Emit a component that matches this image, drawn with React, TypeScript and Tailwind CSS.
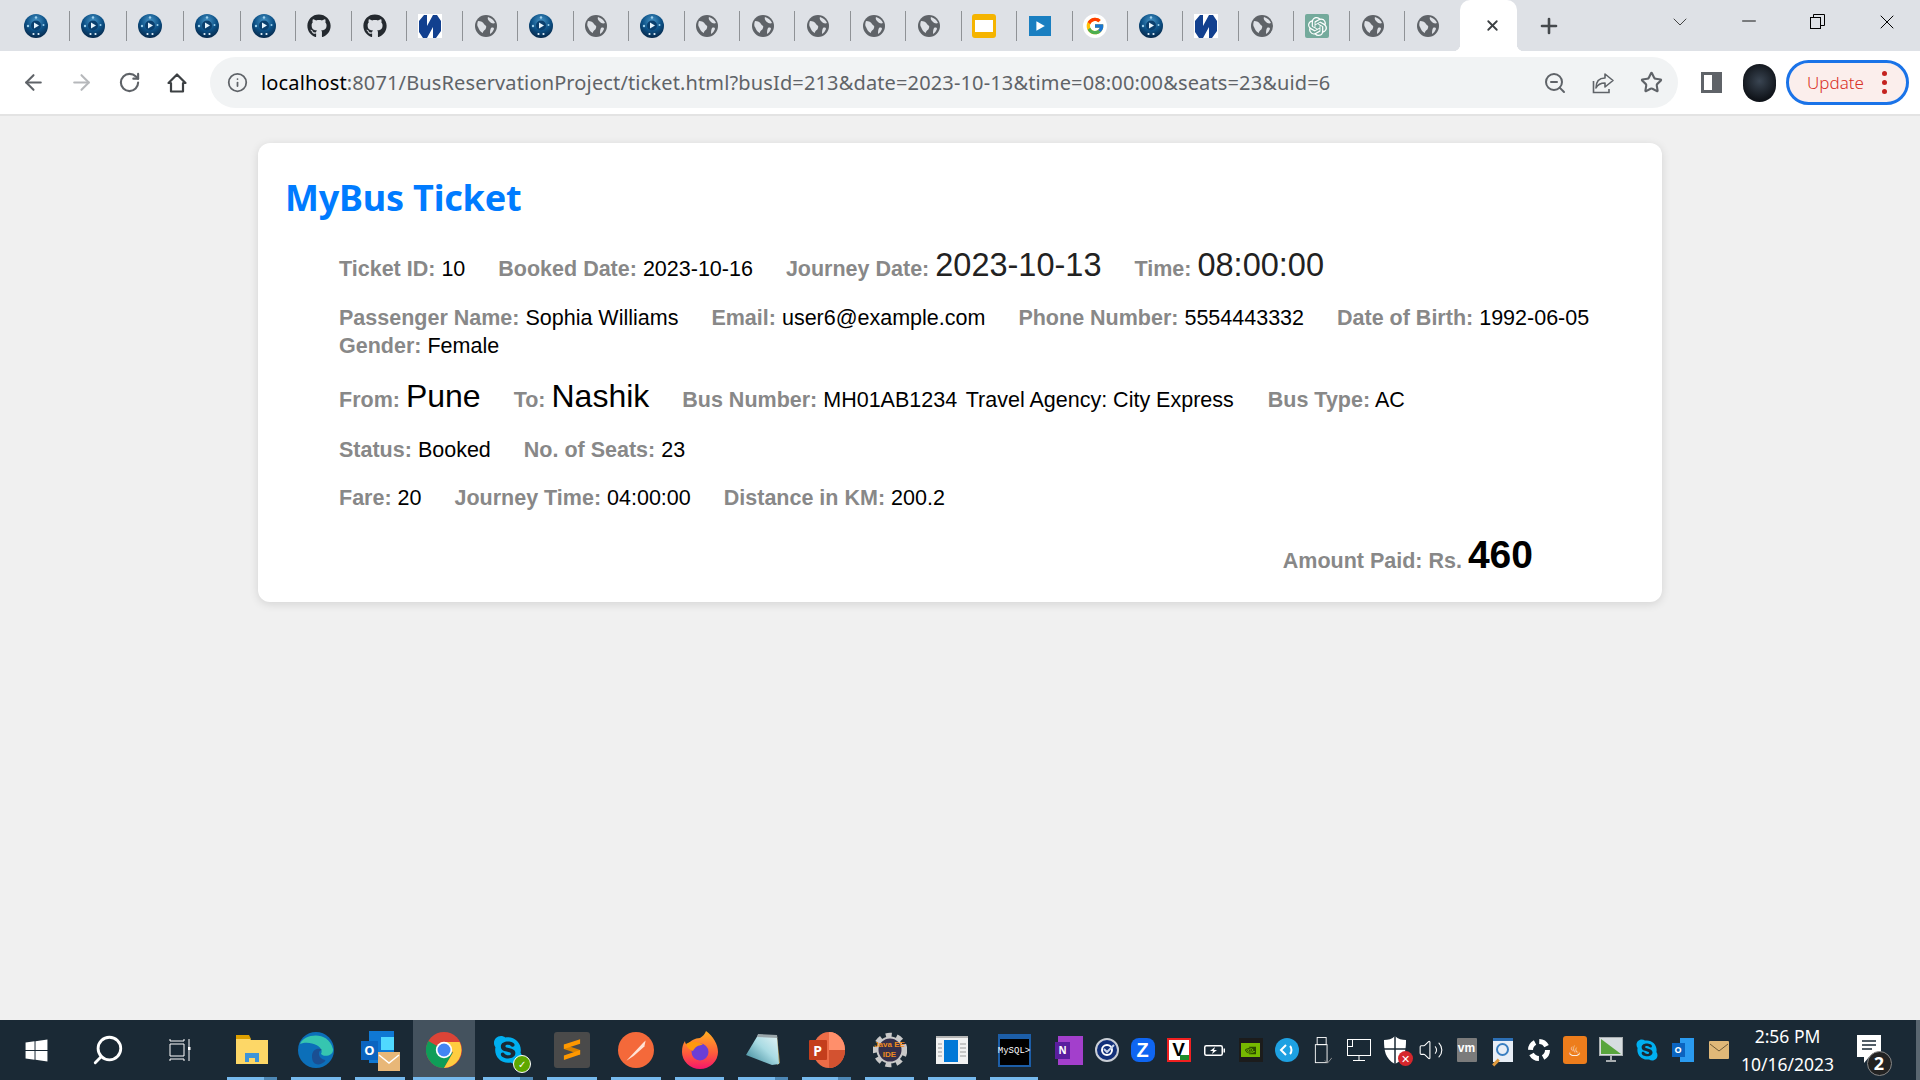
import { FC, ReactNode } from "react";
import { FaGithub, FaWindows, FaSkype } from "react-icons/fa";
import { FcGoogle } from "react-icons/fc";
import { SiOpenai, SiNvidia } from "react-icons/si";
import {
  ArrowLeft,
  ArrowRight,
  RotateCw,
  Info,
  ZoomOut,
  Star,
  ChevronDown,
  Minus,
  X,
  Plus,
  Search,
  Volume2,
} from "lucide-react";

const BlueIcon = () => (
  <svg viewBox="0 0 24 24" className="w-6 h-6">
    <defs>
      <radialGradient id="blueOrb" cx="50%" cy="30%" r="70%">
        <stop offset="0%" stopColor="#4a97c8" />
        <stop offset="55%" stopColor="#0d5288" />
        <stop offset="100%" stopColor="#06284a" />
      </radialGradient>
    </defs>
    <circle cx="12" cy="12" r="12" fill="url(#blueOrb)" />
    <circle cx="12" cy="11.5" r="5" fill="#0a3f6e" />
    <path d="M10 8.5l5 3-5 3z" fill="#e6f4fc" />
    <circle cx="4" cy="12" r="1.2" fill="#9fd0ec" />
    <circle cx="19.5" cy="11" r="1" fill="#9fd0ec" />
    <circle cx="12" cy="3.5" r="1.2" fill="#9fd0ec" />
    <circle cx="9.5" cy="20" r="1.1" fill="#e6f4fc" />
    <circle cx="14.5" cy="20" r="1.1" fill="#e6f4fc" />
  </svg>
);

const GlobeIcon = () => (
  <svg viewBox="0 0 24 24" className="w-6 h-6">
    <circle cx="12" cy="12" r="11" fill="#5f6368" />
    <path
      d="M4 7c3 0 5 1 6 3s3 1 2 4-3 2-3 5c-3-1-4-4-5-6-1-1-1-4 0-6zM14 3c3 1 6 3 7 6-2 1-4 0-5-1s-3-3-2-5zM17 14c2-1 3 0 3 1-1 2-2 4-4 5 0-2 0-4 1-6z"
      fill="#dee1e6"
    />
  </svg>
);

const NIcon = () => (
  <svg viewBox="0 0 24 24" className="w-6 h-6">
    <rect width="24" height="24" fill="#fff" />
    <path
      d="M1 7l5-6h3v11l6-11h4l4 6v10l-5 7h-3V13L9 24H5l-4-6z"
      fill="#12408f"
    />
  </svg>
);

const GithubIcon = () => <FaGithub className="w-6 h-6 text-[#24292f]" />;

const SlidesIcon = () => (
  <div className="w-6 h-6 rounded-[3px] bg-[#f5b400] flex items-center justify-center">
    <div className="w-[18px] h-[12px] bg-white" />
  </div>
);

const VideoIcon = () => (
  <div className="w-[22px] h-[20px] bg-[#1a7fc1] flex items-center justify-center">
    <svg viewBox="0 0 10 10" className="w-3 h-3">
      <path d="M2 1l7 4-7 4z" fill="#fff" />
    </svg>
  </div>
);

const GptIcon = () => (
  <div className="w-6 h-6 rounded-[2px] bg-[#74aa9c] flex items-center justify-center">
    <SiOpenai className="w-[19px] h-[19px] text-white" />
  </div>
);

const GoogleIcon = () => (
  <div className="w-6 h-6 rounded-full bg-white flex items-center justify-center">
    <FcGoogle className="w-5 h-5" />
  </div>
);

const tabIcons: FC[] = [
  BlueIcon, BlueIcon, BlueIcon, BlueIcon, BlueIcon,
  GithubIcon, GithubIcon, NIcon, GlobeIcon, BlueIcon,
  GlobeIcon, BlueIcon, GlobeIcon, GlobeIcon, GlobeIcon,
  GlobeIcon, GlobeIcon, SlidesIcon, VideoIcon, GoogleIcon,
  BlueIcon, NIcon, GlobeIcon, GptIcon, GlobeIcon, GlobeIcon,
];

const TabStrip = () => (
  <div className="h-[51px] bg-[#dee1e6] flex pl-[13px]">
    <div className="flex w-[1447px] shrink-0 pt-[14px] items-start">
      {tabIcons.map((Icon, i) => (
        <div key={i} className="shrink-0 flex items-start pl-[10.75px]">
          <div className="w-6 h-6 shrink-0 flex items-center justify-center">
            <Icon />
          </div>
          {i < tabIcons.length - 1 && (
            <div
              className={`${
                i < 4 ? "ml-[21.25px]" : "ml-[19.7px]"
              } -mt-[3px] w-[1px] shrink-0 h-[30px] bg-[#8f9296]`}
            />
          )}
        </div>
      ))}
    </div>
    <div className="relative w-[57px] shrink-0 h-[51px] bg-white rounded-t-[10px] flex items-center justify-center">
      <span className="absolute -left-[7px] bottom-0 w-[7px] h-[7px] bg-[radial-gradient(circle_at_0_0,#dee1e6_7px,#fff_7.5px)]" />
      <span className="absolute -right-[7px] bottom-0 w-[7px] h-[7px] bg-[radial-gradient(circle_at_100%_0,#dee1e6_7px,#fff_7.5px)]" />
      <X className="w-[17px] h-[17px] text-[#3c4043] ml-[8px]" strokeWidth={2.6} />
    </div>
    <div className="w-[64px] shrink-0 flex items-center justify-center">
      <Plus className="w-[24px] h-[24px] text-[#45494d]" strokeWidth={2.6} />
    </div>
    <div className="flex-1 flex items-start pt-[10px] text-black">
      <div className="w-[69px] flex justify-center ml-[64px]">
        <ChevronDown className="w-[28px] h-[24px] text-[#444]" strokeWidth={1} />
      </div>
      <div className="w-[69px] flex justify-center">
        <Minus className="w-[22px] h-[22px]" strokeWidth={1} />
      </div>
      <div className="w-[69px] flex justify-center pt-[4px]">
        <svg viewBox="0 0 15 15" className="w-[15px] h-[15px]" fill="none" stroke="#000">
          <rect x="0.5" y="3.5" width="10" height="11" />
          <path d="M3.5 3.5v-3h11v11h-4" />
        </svg>
      </div>
      <div className="w-[69px] flex justify-center">
        <X className="w-[24px] h-[24px]" strokeWidth={1} />
      </div>
    </div>
  </div>
);

const Toolbar = () => (
  <div className="h-[65px] bg-white border-b-2 border-[#e3e3e3] flex items-start">
    <div className="flex items-center w-[210px] h-[63px] pl-[9px] text-[#5f6368]">
      <div className="w-[48px] flex justify-center">
        <ArrowLeft className="w-[25px] h-[25px]" strokeWidth={2} />
      </div>
      <div className="w-[48px] flex justify-center">
        <ArrowRight className="w-[25px] h-[25px] text-[#b6b8bb]" strokeWidth={2} />
      </div>
      <div className="w-[48px] flex justify-center">
        <RotateCw className="w-[23px] h-[23px]" strokeWidth={2.2} />
      </div>
      <div className="w-[48px] flex justify-center">
        <svg viewBox="0 0 24 24" className="w-[24px] h-[24px]" fill="none" stroke="#3c4043" strokeWidth="2.2">
          <path d="M12 3.5L3.5 12H6v8.5h12V12h2.5z" strokeLinejoin="round" />
        </svg>
      </div>
    </div>
    <div className="mt-[6px] w-[1468px] h-[51px] bg-[#f1f3f4] rounded-full flex items-center pl-[17px] font-['Noto_Sans',sans-serif]">
      <Info className="w-[21px] h-[21px] text-[#5f6368] shrink-0" />
      <div className="ml-[13px] flex-1 text-[20px] whitespace-nowrap text-[#5f6368] tracking-[0.14px]">
        <span className="text-black">localhost</span>:8071/BusReservationProject/ticket.html?busId=213&amp;date=2023-10-13&amp;time=08:00:00&amp;seats=23&amp;uid=6
      </div>
      <div className="flex items-center text-[#5f6368] pr-[3px]">
        <div className="w-[48px] flex justify-center">
          <ZoomOut className="w-[24px] h-[24px]" />
        </div>
        <div className="w-[48px] flex justify-center">
          <svg viewBox="0 0 24 24" className="w-[24px] h-[24px]" fill="none" stroke="#5f6368" strokeWidth="1.6">
            <path d="M2.5 10v11.5H18V18" />
            <path d="M14 3l8 6.5-8 6.5v-4c-4 0-7 1-9 5 0-6 3-10 9-10z" strokeLinejoin="round" />
          </svg>
        </div>
        <div className="w-[48px] flex justify-center">
          <Star className="w-[23px] h-[23px]" strokeWidth={2.2} />
        </div>
      </div>
    </div>
    <div className="flex items-center h-[63px] ml-[23px]">
      <div className="w-[21px] h-[21px] border-[3px] border-r-[10px] border-[#5f6368]" />
      <div className="ml-[21px] w-[33px] h-[38px] rounded-full bg-[radial-gradient(circle_at_50%_45%,#3a4552,#10141a_70%)]" />
      <div className="ml-[10px] w-[123px] h-[45px] rounded-full border-[3px] border-[#1a73e8] bg-[#fbeeec] flex items-center pl-[18px] text-[#d93025] text-[17px] font-light font-['Noto_Sans',sans-serif]">
        Update
        <div className="ml-[18px] flex flex-col gap-[4px]">
          <span className="w-[5px] h-[5px] rounded-full bg-[#c5221f]" />
          <span className="w-[5px] h-[5px] rounded-full bg-[#c5221f]" />
          <span className="w-[5px] h-[5px] rounded-full bg-[#c5221f]" />
        </div>
      </div>
    </div>
  </div>
);

const Field: FC<{ label: string; children: ReactNode; valueClass?: string }> = ({
  label,
  children,
  valueClass = "",
}) => (
  <span className="mr-[33px] whitespace-nowrap inline-block">
    <b className="font-bold text-[#888888]">{label}:</b>{" "}
    <span className={valueClass}>{children}</span>
  </span>
);

const TicketCard = () => (
  <div className="mt-[27px] mx-auto w-[1404px] h-[459px] bg-white rounded-[12px] shadow-[0_2px_10px_rgba(0,0,0,0.12)] pt-[27px] pl-[27px] font-['Liberation_Sans',sans-serif] text-[21.5px] text-black">
    <h1 className="font-['Noto_Sans',sans-serif] font-bold text-[36px] leading-[56px] text-[#007bff] tracking-[-0.2px]">
      MyBus Ticket
    </h1>
    <div className="pl-[54px] pr-[30px] mt-[25px] leading-[28px]">
      <p className="mb-[21px]">
        <Field label="Ticket ID">10</Field>
        <Field label="Booked Date">2023-10-16</Field>
        <Field label="Journey Date" valueClass="text-[32.5px] text-[#222]">
          2023-10-13
        </Field>
        <Field label="Time" valueClass="text-[32.5px] text-[#222]">
          08:00:00
        </Field>
      </p>
      <p className="mb-[22px]">
        <Field label="Passenger Name">Sophia Williams</Field>
        <Field label="Email">user6@example.com</Field>
        <Field label="Phone Number">5554443332</Field>
        <Field label="Date of Birth">1992-06-05</Field>
        <Field label="Gender">Female</Field>
      </p>
      <p className="mb-[22px]">
        <Field label="From" valueClass="text-[32px]">
          Pune
        </Field>
        <Field label="To" valueClass="text-[32px]">
          Nashik
        </Field>
        <b className="font-bold text-[#888888]">Bus Number:</b>{" "}
        <span className="mr-[3px]">MH01AB1234</span>{" "}
        <span className="mr-[34px]">Travel Agency: City Express</span>
        <Field label="Bus Type">AC</Field>
      </p>
      <p className="mb-[20px]">
        <Field label="Status">Booked</Field>
        <Field label="No. of Seats">23</Field>
      </p>
      <p>
        <Field label="Fare">20</Field>
        <Field label="Journey Time">04:00:00</Field>
        <Field label="Distance in KM">200.2</Field>
      </p>
      <p className="mt-[29px] text-right pr-[99px]">
        <b className="font-bold text-[#888888]">Amount Paid: Rs.</b>{" "}
        <b className="font-bold text-[39px]">460</b>
      </p>
    </div>
  </div>
);

// taskbar drawings
const ChromeIcon = () => (
  <svg viewBox="0 0 36 36" className="w-9 h-9">
    <circle cx="18" cy="18" r="18" fill="#db4437" />
    <path d="M18 18L2.4 9A18 18 0 0 0 18 36l9-15.6z" fill="#0f9d58" />
    <path d="M18 10h15.6A18 18 0 0 1 18 36l9-15.6z" fill="#ffcd40" />
    <circle cx="18" cy="18" r="8.2" fill="#fff" />
    <circle cx="18" cy="18" r="6.5" fill="#4285f4" />
  </svg>
);

const EdgeIcon = () => (
  <svg viewBox="0 0 36 36" className="w-9 h-9">
    <circle cx="18" cy="18" r="18" fill="#0c6fb9" />
    <path d="M2 12C6 2 30-2 35 17c1 6-8 9-12 5 4-8-12-14-21-10z" fill="#36c5b0" />
    <path d="M14 24c0-7 7-9 10-6-5 0-4 9 3 10 2 0-4 6-9 4-3-1-4-4-4-8z" fill="#1a4f93" />
  </svg>
);

const FolderIcon = () => (
  <svg viewBox="0 0 32 30" className="w-8 h-[30px]">
    <path d="M0 2h13l2 3h17v24H0z" fill="#fdd767" />
    <path d="M0 0h13l2 4H0z" fill="#dea000" />
    <path d="M9 27V18h14v9h-4v-4h-6v4z" fill="#3d94d9" />
  </svg>
);

const OutlookIcon = () => (
  <div className="relative w-[38px] h-[38px]">
    <div className="absolute left-[8px] top-0 w-[25px] h-[32px] bg-[#0f78d4]" />
    <div className="absolute left-[20px] top-[6px] w-[13px] h-[13px] bg-[#50d9ff]" />
    <div className="absolute left-0 top-[10px] w-[17px] h-[19px] bg-[#0b64c0] text-white text-[13px] font-bold flex items-center justify-center">
      O
    </div>
    <div className="absolute left-[17px] top-[21px] w-[22px] h-[19px] bg-[#e8b778]">
      <svg viewBox="0 0 22 19" className="w-full h-full">
        <path d="M1 3l10 8 10-8" stroke="#fff" strokeWidth="1.5" fill="none" />
      </svg>
    </div>
  </div>
);

const SkypeIcon = () => (
  <div className="relative w-9 h-9 flex items-center justify-center">
    <FaSkype className="w-[32px] h-[32px] text-[#00aff0]" />
    <div className="absolute right-[-5px] bottom-[-5px] w-[18px] h-[18px] rounded-full bg-[#5ea700] border border-white text-white text-[10px] leading-[16px] text-center">
      ✓
    </div>
  </div>
);

const SublimeIcon = () => (
  <div className="w-9 h-9 rounded-[3px] bg-[#4a4a4a] flex items-center justify-center">
    <svg viewBox="0 0 20 26" className="w-[18px] h-[24px]">
      <path d="M1 12L19 18v-5L1 7z" fill="#d98200" />
      <path d="M19 1L1 7v5L19 6zM19 13L1 19v5l18-6z" fill="#ff9800" />
    </svg>
  </div>
);

const SwiftIcon = () => (
  <div className="w-9 h-9 rounded-full bg-[#f4693a] flex items-center justify-center">
    <svg viewBox="0 0 20 20" className="w-6 h-6">
      <path d="M2 19L16 4l2-2-1 5-9 8z" fill="#ffe3d6" />
    </svg>
  </div>
);

const FirefoxIcon = () => (
  <svg viewBox="0 0 36 38" className="w-9 h-[38px]">
    <defs>
      <linearGradient id="foxBody" x1="0" y1="0" x2="0" y2="1">
        <stop offset="0%" stopColor="#ffb020" />
        <stop offset="60%" stopColor="#ff5a3c" />
        <stop offset="100%" stopColor="#f5156c" />
      </linearGradient>
    </defs>
    <path d="M24 0c7 5 12 13 12 21a18 17 0 0 1-36 0c0-5 1-8 3-11 0 2 1 3 2 4 3-4 8-7 13-7 3-2 5-4 6-7z" fill="url(#foxBody)" />
    <circle cx="18" cy="21" r="8.5" fill="#6b3ed6" />
    <path d="M4 13c5-3 12-3 17 1-5 0-8 2-10 6-3-1-6-3-7-7z" fill="#ff980e" />
  </svg>
);

const NotepadIcon = () => (
  <svg viewBox="0 0 34 34" className="w-[34px] h-[34px]">
    <defs>
      <linearGradient id="padFill" x1="0" y1="1" x2="1" y2="0">
        <stop offset="0%" stopColor="#2f7e91" />
        <stop offset="55%" stopColor="#a9dbe3" />
        <stop offset="100%" stopColor="#e6f4f6" />
      </linearGradient>
    </defs>
    <path d="M31 3l3 27-3 2z" fill="#a28a4a" />
    <path d="M12 2l19 1 2 28-7 1L0 22z" fill="url(#padFill)" />
    <path d="M12 1l19 1 .3 3L11 4z" fill="#9aa6aa" />
  </svg>
);

const PowerpointIcon = () => (
  <div className="relative w-[36px] h-[36px]">
    <svg viewBox="0 0 32 36" className="absolute right-0 top-0 w-[32px] h-[36px]">
      <ellipse cx="16" cy="18" rx="16" ry="18" fill="#ed6c47" />
      <path d="M16 18V0a16 18 0 0 1 16 18z" fill="#ff8f6b" />
      <path d="M16 18h16a16 18 0 0 1-16 18z" fill="#d35230" />
    </svg>
    <div className="absolute left-0 top-[8px] w-[18px] h-[20px] rounded-[1px] bg-[#c43e1c] text-white text-[14px] font-bold flex items-center justify-center">
      P
    </div>
  </div>
);

const JavaEeIcon = () => (
  <div className="relative w-[34px] h-[36px] flex items-center justify-center">
    <svg viewBox="0 0 34 36" className="absolute inset-0 w-full h-full">
      <circle cx="17" cy="18" r="15" fill="none" stroke="#c9c9c9" strokeWidth="4.5" strokeDasharray="6 5" />
      <circle cx="17" cy="18" r="12.5" fill="#352f4a" stroke="#c9c9c9" strokeWidth="2" />
    </svg>
    <div className="relative flex flex-col items-center font-['Liberation_Sans',sans-serif] text-[#ef8a1f] text-[8px] leading-[10px] font-bold">
      <span className="whitespace-nowrap">Java EE</span>
      <span>IDE</span>
    </div>
  </div>
);

const WindowIcon = () => (
  <svg viewBox="0 0 32 28" className="w-8 h-7">
    <rect width="32" height="28" fill="#f2f2f2" />
    <rect width="32" height="2" fill="#b5b5b5" />
    <rect x="8" y="4" width="14" height="22" fill="#0078d7" />
    <path d="M2 8h4M2 12h4M2 16h4M2 20h4M24 8h6M24 12h6M24 16h6M24 20h6" stroke="#9a9a9a" />
  </svg>
);

const MysqlIcon = () => (
  <div className="w-[33px] h-[33px] bg-black border-[2px] border-[#1c5ea8] border-t-[5px] flex items-center justify-center text-white text-[9px] font-['Liberation_Mono',monospace]">
    MySQL&gt;
  </div>
);

const OneNoteIcon = () => (
  <div className="relative w-[25px] h-[29px] bg-[#a33fcc]">
    <div className="absolute -left-[3px] top-[6px] w-[15px] h-[17px] bg-[#5a1e9e] text-white text-[10px] font-bold flex items-center justify-center">
      N
    </div>
  </div>
);

const CheckRoundIcon = () => (
  <svg viewBox="0 0 24 24" className="w-6 h-6">
    <circle cx="12" cy="12" r="11" fill="#12307a" stroke="#c9ced6" strokeWidth="2" />
    <circle cx="12" cy="12" r="5" fill="none" stroke="#fff" strokeWidth="2" />
    <path d="M9 11l3 3 7-7" fill="none" stroke="#c8d4ea" strokeWidth="2" />
  </svg>
);

const ZoomTrayIcon = () => (
  <div className="w-6 h-[24px] rounded-[8px] bg-[#0f66f2] text-white text-[20px] font-bold font-['Liberation_Sans',sans-serif] flex items-center justify-center">
    Z
  </div>
);

const VimIcon = () => (
  <div className="relative w-6 h-[24px] bg-white border-[2px] border-[#f02020] flex items-center justify-center text-black text-[19px] leading-[20px] font-black font-['Liberation_Sans',sans-serif]">
    V
    <div className="absolute right-0 bottom-0 w-[9px] h-[5px] bg-[#1e8c2e]" />
  </div>
);

const BatteryIcon = () => (
  <svg viewBox="0 0 21 11" className="w-[21px] h-[11px]">
    <rect x="0.75" y="0.75" width="17.5" height="9.5" rx="1.5" fill="none" stroke="#fff" strokeWidth="1.5" />
    <rect x="19.5" y="3.5" width="1.5" height="4" fill="#fff" />
    <path d="M11 2L6 6h3l-1 3 5-4h-3z" fill="#fff" />
  </svg>
);

const NvidiaIcon = () => (
  <div className="w-6 h-[24px] bg-[#1c1c1c] flex items-center justify-center">
    <div className="w-[19px] h-[14px] bg-[#76b900] flex items-center justify-center">
      <SiNvidia className="w-[15px] h-[11px] text-[#2c4a00]" />
    </div>
  </div>
);

const TelegramLike = () => (
  <svg viewBox="0 0 24 24" className="w-6 h-6">
    <circle cx="12" cy="12" r="12" fill="#1ea1e2" />
    <path d="M11 7l-5 5 5 5M15 8c2 2 2 6 0 8" fill="none" stroke="#fff" strokeWidth="2" />
  </svg>
);

const UsbIcon = () => (
  <svg viewBox="0 0 20 30" className="w-[18px] h-[29px]" fill="none" stroke="#fff">
    <rect x="3.5" y="0.5" width="10" height="8" />
    <rect x="1.5" y="8.5" width="13" height="20" />
    <path d="M12 26l3 3 5-6" stroke="#999" />
  </svg>
);

const NetworkIcon = () => (
  <svg viewBox="0 0 24 24" className="w-6 h-6" fill="none" stroke="#fff">
    <rect x="0.5" y="1.5" width="23" height="16" fill="#1a2935" />
    <rect x="0.5" y="1.5" width="5" height="7" />
    <path d="M12 18v4M6 22.5h12" />
  </svg>
);

const ShieldIcon = () => (
  <div className="relative w-6 h-7">
    <svg viewBox="0 0 24 28" className="w-6 h-7">
      <path d="M12 0c3 3 7 4 11 4 0 10-1 19-11 24C2 23 1 14 1 4c4 0 8-1 11-4z" fill="#fff" />
      <path d="M12 0v28M1 13h22" stroke="#1a2935" strokeWidth="1.5" />
    </svg>
    <div className="absolute -right-[6px] -bottom-[2px] w-[15px] h-[15px] rounded-full bg-[#d6262c] text-white text-[11px] leading-[15px] text-center">
      ✕
    </div>
  </div>
);

const VmIcon = () => (
  <div className="w-5 h-6 bg-[#7b7b7b] rounded-[1px] text-white text-[12px] leading-[20px] font-bold text-center font-['Liberation_Sans',sans-serif]">
    vm
  </div>
);

const MagnifierIcon = () => (
  <div className="relative w-5 h-6 bg-[#e8eef6] border-t-[3px] border-[#2c6fb5]">
    <div className="absolute left-[3px] top-[2px] w-[13px] h-[13px] rounded-full border-[2px] border-[#3a7fc1]" />
    <div className="absolute -left-[1px] bottom-[-2px] w-[8px] h-[3px] -rotate-45 bg-[#e09a3e]" />
  </div>
);

const SpinIcon = () => (
  <svg viewBox="0 0 24 24" className="w-6 h-6">
    <circle cx="12" cy="12" r="8.5" fill="none" stroke="#fff" strokeWidth="5" strokeDasharray="9 4.35" />
  </svg>
);

const JavaIcon = () => (
  <div className="w-6 h-[28px] rounded-[3px] bg-[#ed7d1c] text-white text-[15px] leading-[28px] text-center">
    ♨
  </div>
);

const MonitorIcon = () => (
  <svg viewBox="0 0 24 26" className="w-6 h-[26px]">
    <rect x="0.5" y="0.5" width="23" height="18" fill="#d7dde0" stroke="#a8adb0" />
    <path d="M2 2l20 15H2z" fill="#58a53d" />
    <path d="M12 19v4M7 24h10" stroke="#a8adb0" strokeWidth="2" />
  </svg>
);

const SmallOutlook = () => (
  <div className="relative w-[22px] h-[24px]">
    <div className="absolute right-0 top-0 w-[14px] h-[24px] bg-[#2a9bf0]" />
    <div className="absolute left-0 top-[5px] w-[13px] h-[14px] bg-[#0b64c0] text-white text-[9px] font-bold flex items-center justify-center">
      O
    </div>
  </div>
);

const MailIcon = () => (
  <svg viewBox="0 0 20 18" className="w-5 h-[18px]">
    <rect width="20" height="18" rx="1" fill="#e0b878" />
    <path d="M1 3l9 7 9-7" stroke="#6f5a36" fill="none" />
  </svg>
);

const TrayBox: FC<{ children: ReactNode }> = ({ children }) => (
  <div className="w-[36px] h-[60px] flex items-center justify-center">{children}</div>
);

const apps: { icon: ReactNode; w: number; active?: boolean; stack?: boolean }[] = [
  { icon: <FolderIcon />, w: 64, stack: true },
  { icon: <EdgeIcon />, w: 64 },
  { icon: <OutlookIcon />, w: 64 },
  { icon: <ChromeIcon />, w: 64, active: true },
  { icon: <SkypeIcon />, w: 64, stack: true },
  { icon: <SublimeIcon />, w: 64 },
  { icon: <SwiftIcon />, w: 64 },
  { icon: <FirefoxIcon />, w: 63 },
  { icon: <NotepadIcon />, w: 64, stack: true },
  { icon: <PowerpointIcon />, w: 63, stack: true },
  { icon: <JavaEeIcon />, w: 63 },
  { icon: <WindowIcon />, w: 62 },
  { icon: <MysqlIcon />, w: 62 },
];

const trayIcons: ReactNode[] = [
  <OneNoteIcon />,
  <CheckRoundIcon />,
  <ZoomTrayIcon />,
  <VimIcon />,
  <BatteryIcon />,
  <NvidiaIcon />,
  <TelegramLike />,
  <UsbIcon />,
  <NetworkIcon />,
  <ShieldIcon />,
  <Volume2 className="w-[26px] h-[26px] text-white" strokeWidth={1} />,
  <VmIcon />,
  <MagnifierIcon />,
  <SpinIcon />,
  <JavaIcon />,
  <MonitorIcon />,
  <FaSkype className="w-6 h-6 text-[#00aff0]" />,
  <SmallOutlook />,
  <MailIcon />,
];

const Taskbar = () => (
  <div className="h-[60px] bg-[#1a2935] flex text-white font-['Noto_Sans',sans-serif]">
    <div className="w-[72px] flex items-center justify-center">
      <FaWindows className="w-[25px] h-[25px]" />
    </div>
    <div className="w-[72px] flex items-center justify-center">
      <Search className="w-[34px] h-[34px] -scale-x-100" strokeWidth={2} />
    </div>
    <div className="w-[72px] flex items-center justify-center">
      <svg viewBox="0 0 24 24" className="w-6 h-6" fill="none" stroke="#fff">
        <path d="M2 1v2h14V1M2 6h14v12H2zM2 23v-2h14v2M21 1v22" />
        <rect x="20" y="9" width="2.5" height="3" fill="#fff" stroke="none" />
      </svg>
    </div>
    <div className="w-[4px]" />
    {apps.map((app, i) => (
      <div
        key={i}
        style={{ width: app.w }}
        className="relative h-[60px] flex items-center justify-center"
      >
        {app.active && <div className="absolute inset-y-0 left-[1px] right-[1px] bg-[#44525e]" />}
        <div className="relative">{app.icon}</div>
        <div
          className={`absolute bottom-0 h-[3px] bg-[#76b9ed] ${
            app.active ? "left-[1px] right-[1px]" : "left-[7px] right-[7px]"
          }`}
        />
        {app.stack && (
          <div className="absolute right-[7px] w-[13px] bottom-0 h-[3px] bg-[#4d87b5]" />
        )}
      </div>
    ))}
    <div className="w-[7.5px]" />
    {trayIcons.map((t, i) => (
      <TrayBox key={i}>{t}</TrayBox>
    ))}
    <div className="-ml-[4px] w-[110px] flex flex-col items-center justify-center text-[17.5px] leading-[28px]">
      <span>2:56 PM</span>
      <span>10/16/2023</span>
    </div>
    <div className="relative flex-1 flex items-center justify-center pr-[24px]">
      <svg viewBox="0 0 24 30" className="w-6 h-[30px]">
        <path d="M0 0h24v22H12l-5 6v-6H0z" fill="#fff" />
        <path d="M5 6h14M5 10h14M5 14h10" stroke="#1a2935" strokeWidth="1.5" />
      </svg>
      <div className="absolute left-[24px] top-[31px] w-[25px] h-[25px] rounded-full bg-[#222] border border-[#888] text-[18px] leading-[23px] text-center font-bold">
        2
      </div>
      <div className="absolute right-0 top-0 bottom-0 w-[4px] bg-[#5a6670]" />
    </div>
  </div>
);

const App = () => (
  <div className="w-[1920px] h-[1080px] flex flex-col overflow-hidden bg-[#f0f0f0]">
    <TabStrip />
    <Toolbar />
    <main className="flex-1">
      <TicketCard />
    </main>
    <Taskbar />
  </div>
);

export default App;
